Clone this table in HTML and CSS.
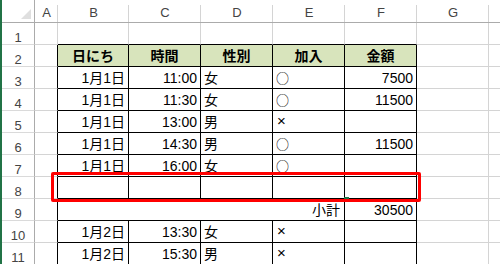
FILE: index.html
```html
<!DOCTYPE html>
<html lang="ja">

<head>
  <meta charset="UTF-8" />
  <title>Sheet1</title>
  <link rel="stylesheet" href="styles.css">
</head>

<body>
  <div class="sheet">
    <!-- column headers -->
    <div class="corner"><svg width="10" height="10" viewBox="0 0 10 10"><polygon points="10,0 10,10 0,10" fill="#dfdfdf" /></svg></div>
    <div class="colhead">A</div>
    <div class="colhead">B</div>
    <div class="colhead">C</div>
    <div class="colhead">D</div>
    <div class="colhead">E</div>
    <div class="colhead">F</div>
    <div class="colhead">G</div>
    <div class="colhead"></div>

    <!-- 1 -->
    <div class="rowhead">1</div>
    <div class="cell"></div>
    <div class="cell above"></div>
    <div class="cell above"></div>
    <div class="cell above"></div>
    <div class="cell above"></div>
    <div class="cell above"></div>
    <div class="cell"></div>
    <div class="cell"></div>

    <!-- 2 -->
    <div class="rowhead">2</div>
    <div class="cell before"></div>
    <div class="cell tb th">日にち</div>
    <div class="cell tb th">時間</div>
    <div class="cell tb th">性別</div>
    <div class="cell tb th">加入</div>
    <div class="cell tb th">金額</div>
    <div class="cell"></div>
    <div class="cell"></div>

    <!-- 3 -->
    <div class="rowhead">3</div>
    <div class="cell before"></div>
    <div class="cell tb num">1月1日</div>
    <div class="cell tb num">11:00</div>
    <div class="cell tb">女</div>
    <div class="cell tb yes">○</div>
    <div class="cell tb num">7500</div>
    <div class="cell"></div>
    <div class="cell"></div>

    <!-- 4 -->
    <div class="rowhead">4</div>
    <div class="cell before"></div>
    <div class="cell tb num">1月1日</div>
    <div class="cell tb num">11:30</div>
    <div class="cell tb">女</div>
    <div class="cell tb yes">○</div>
    <div class="cell tb num">11500</div>
    <div class="cell"></div>
    <div class="cell"></div>

    <!-- 5 -->
    <div class="rowhead">5</div>
    <div class="cell before"></div>
    <div class="cell tb num">1月1日</div>
    <div class="cell tb num">13:00</div>
    <div class="cell tb">男</div>
    <div class="cell tb no">×</div>
    <div class="cell tb num"></div>
    <div class="cell"></div>
    <div class="cell"></div>

    <!-- 6 -->
    <div class="rowhead">6</div>
    <div class="cell before"></div>
    <div class="cell tb num">1月1日</div>
    <div class="cell tb num">14:30</div>
    <div class="cell tb">男</div>
    <div class="cell tb yes">○</div>
    <div class="cell tb num">11500</div>
    <div class="cell"></div>
    <div class="cell"></div>

    <!-- 7 -->
    <div class="rowhead">7</div>
    <div class="cell before"></div>
    <div class="cell tb num">1月1日</div>
    <div class="cell tb num">16:00</div>
    <div class="cell tb">女</div>
    <div class="cell tb yes">○</div>
    <div class="cell tb num"></div>
    <div class="cell"></div>
    <div class="cell"></div>

    <!-- 8 : inserted blank row -->
    <div class="rowhead">8</div>
    <div class="cell before"></div>
    <div class="cell tb"></div>
    <div class="cell tb"></div>
    <div class="cell tb"></div>
    <div class="cell tb"></div>
    <div class="cell tb"></div>
    <div class="cell"></div>
    <div class="cell"></div>

    <!-- 9 : subtotal, B:E merged -->
    <div class="rowhead">9</div>
    <div class="cell before"></div>
    <div class="cell tb num merged">小計</div>
    <div class="cell tb num">30500</div>
    <div class="cell"></div>
    <div class="cell"></div>

    <!-- 10 -->
    <div class="rowhead">10</div>
    <div class="cell before"></div>
    <div class="cell tb num">1月2日</div>
    <div class="cell tb num">13:30</div>
    <div class="cell tb">女</div>
    <div class="cell tb no">×</div>
    <div class="cell tb num"></div>
    <div class="cell"></div>
    <div class="cell"></div>

    <!-- 11 -->
    <div class="rowhead">11</div>
    <div class="cell before"></div>
    <div class="cell tb num">1月2日</div>
    <div class="cell tb num">15:30</div>
    <div class="cell tb">男</div>
    <div class="cell tb no">×</div>
    <div class="cell tb num"></div>
    <div class="cell"></div>
    <div class="cell"></div>

    <div class="fill-handle"></div>
    <div class="highlight"></div>
  </div>
</body>

</html>
```

FILE: styles.css
```css
* {
  box-sizing: border-box;
}

body {
  margin: 0;
  overflow: hidden;
  background: #fff;
}

.sheet {
  position: relative;
  display: grid;
  grid-template-columns: 33px 23px 71px repeat(6, 72px);
  grid-template-rows: 23px repeat(11, 22px);
  border-left: 2px solid #217346;
  font-family: "Liberation Sans", "Noto Sans CJK JP", sans-serif;
}

.corner {
  display: flex;
  justify-content: flex-end;
  align-items: flex-end;
  padding: 0 3px 3px 0;
  border-right: 1px solid #ababab;
  border-bottom: 1px solid #ababab;
}

.corner svg {
  display: block;
}

.colhead {
  display: flex;
  justify-content: center;
  align-items: flex-end;
  padding-bottom: 3px;
  font-size: 13px;
  line-height: 1;
  color: #444;
  border-bottom: 1px solid #ababab;
  background: linear-gradient(#d4d4d4, #d4d4d4) no-repeat right 0 top 5px / 1px 17px;
}

.rowhead {
  display: flex;
  justify-content: center;
  align-items: flex-end;
  font-size: 13px;
  line-height: 1;
  color: #444;
  border-right: 1px solid #ababab;
  border-bottom: 1px solid #dadada;
}

.cell {
  display: flex;
  align-items: flex-end;
  padding: 0 3px 3px 3px;
  font-size: 14px;
  line-height: 1;
  color: #000;
  white-space: nowrap;
  overflow: hidden;
  border-right: 1px solid #d4d4d4;
  border-bottom: 1px solid #d4d4d4;
}

/* outline of the table comes from the neighbours above and to the left */
.cell.above {
  border-bottom-color: #000;
}

.cell.before {
  border-right-color: #000;
}

.cell.tb {
  border-right-color: #000;
  border-bottom-color: #000;
}

.cell.th {
  justify-content: center;
  font-weight: bold;
  background: #d8e4bc;
}

.cell.num {
  justify-content: flex-end;
}

/* entry marks */
.cell.yes {
  font-family: "Noto Sans CJK JP", sans-serif;
  font-size: 13px;
  padding-bottom: 4px;
}

.cell.no {
  padding-left: 4px;
  padding-bottom: 4px;
  font-size: 15px;
}

.cell.merged {
  grid-column: span 4;
  padding-right: 4px;
}

.highlight {
  position: absolute;
  left: 49px;
  top: 172px;
  width: 370px;
  height: 30px;
  border: 3px solid #ff0000;
  border-radius: 2px;
}

.fill-handle {
  position: absolute;
  left: 342px;
  top: 197px;
  width: 5px;
  height: 4px;
  background: #217346;
}
```
